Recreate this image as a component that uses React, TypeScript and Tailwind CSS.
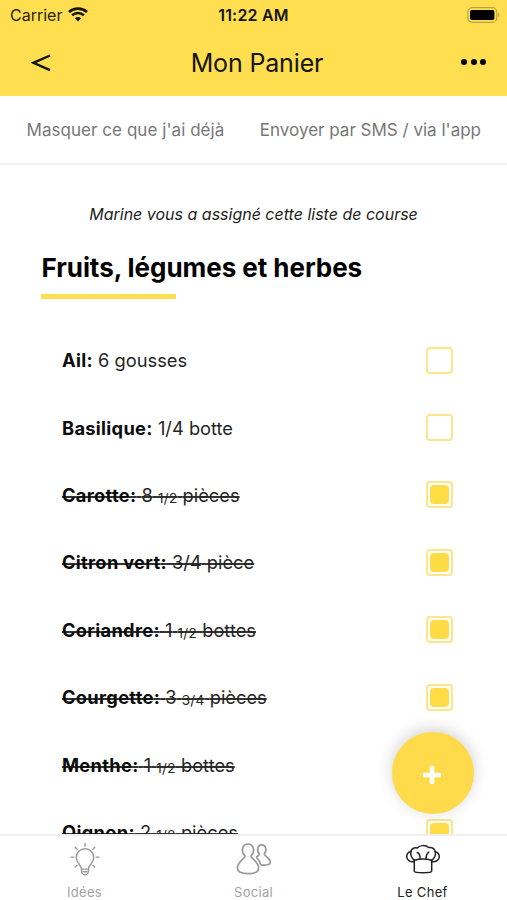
import clsx from "clsx";

type Item = {
  name: string;
  amount: string;
  fraction?: string;
  unit: string;
  done: boolean;
};

const ITEMS: Item[] = [
  { name: "Ail", amount: "6", unit: "gousses", done: false },
  { name: "Basilique", amount: "1/4", unit: "botte", done: false },
  { name: "Carotte", amount: "8", fraction: "1/2", unit: "pièces", done: true },
  { name: "Citron vert", amount: "3/4", unit: "pièce", done: true },
  { name: "Coriandre", amount: "1", fraction: "1/2", unit: "bottes", done: true },
  { name: "Courgette", amount: "3", fraction: "3/4", unit: "pièces", done: true },
  { name: "Menthe", amount: "1", fraction: "1/2", unit: "bottes", done: true },
  { name: "Oignon", amount: "2", fraction: "1/2", unit: "pièces", done: true },
];

const STRIKE = "underline decoration-[#333] decoration-[1.5px] [text-decoration-skip-ink:none]";

function WifiIcon() {
  return (
    <svg width="20" height="15" viewBox="0 0 20 15" fill="none" stroke="#15130a" aria-hidden="true">
      <path d="M1 4.9C6 .4 14 .4 19 4.9" strokeWidth="2.7" />
      <path d="M4.1 8.3c3.4-3 8.4-3 11.8 0" strokeWidth="2.5" />
      <path d="M6.9 11.2c1.8-1.5 4.4-1.5 6.2 0L10 14.4z" fill="#15130a" stroke="none" />
    </svg>
  );
}

function BatteryIcon() {
  return (
    <svg width="33" height="16" viewBox="0 0 33 16" aria-hidden="true">
      <rect x=".8" y=".6" width="29" height="14.8" rx="4.5" fill="none" stroke="#b8a344" strokeWidth="1.2" />
      <rect x="3" y="3" width="24.4" height="10" rx="1.8" fill="#000" />
      <path d="M31.2 5.8c1.8.8 1.8 3.6 0 4.4z" fill="#b8a344" />
    </svg>
  );
}

function BulbIcon() {
  return (
    <svg width="30" height="35" viewBox="0 0 32 36" fill="none" stroke="currentColor" strokeWidth="1.5" strokeLinecap="round" aria-hidden="true">
      <path d="M12.3 28.3c0-4.6-5.6-6.3-5.6-12.5a9.3 9.3 0 0 1 18.6 0c0 6.2-5.6 7.9-5.6 12.5z" />
      <path d="M12.3 28.3v2.2c0 1.8 1.5 3.8 3.7 3.8s3.7-2 3.7-3.8v-2.2M14 31h4" />
      <path d="M16 .8v3M5.6 5l2 2M26.4 5l-2 2M1 15.5h3M28 15.5h3M5.6 26l2-2M26.4 26l-2-2" />
    </svg>
  );
}

function PeopleIcon() {
  return (
    <svg width="36" height="34" viewBox="0 0 36 34" fill="none" stroke="currentColor" strokeWidth="1.7" strokeLinejoin="round" aria-hidden="true">
      <path d="M9 14C4.7 10.3 6 2 12 2s7.3 8.3 3 12c0 2.5 7.6 5.6 7.6 12 0 3.6-4.2 5.6-10.6 5.6S1.4 29.6 1.4 26C1.4 19.6 9 16.5 9 14z" />
      <path d="M20.2 15c1.6-1 3.3-1.7 3.3-3-3-2.5-2.2-9.2 2.3-9.2s5.3 6.7 2.3 9.2c0 1.8 6.2 4 6.2 8 0 2.7-3.6 3.6-9.6 2.8" />
      <path d="M20.2 15c2.2 2.2 3.9 4.5 4.5 7.8" />
    </svg>
  );
}

function ChefIcon() {
  return (
    <svg width="36" height="30" viewBox="0 0 36 30" fill="none" stroke="currentColor" strokeWidth="1.5" strokeLinecap="round" strokeLinejoin="round" aria-hidden="true">
      <path d="M9.3 16v11.2c0 1 3.6 1.5 8.7 1.5s8.7-.5 8.7-1.5V16" />
      <path d="M9.3 16.3c5.2-1.5 12.2-1.5 17.4 0" />
      <path d="M9 17.8c-3.5.3-7.3-1.3-7.3-5C1.7 9.4 3.4 8 5.9 7.5 6.7 4.4 9.6 3.2 12.3 4 14.7.9 21.3.9 23.7 3.6c3.3-.5 5.7 1 6.6 4.1 2.4.6 4 2.3 4 5.1 0 3.7-3.6 5.2-7.4 5" />
      <path d="M5.9 7.5c-.7 3.3.6 6.3 3.4 8.8M30.3 7.7c.8 3.2-.8 6.2-3.6 8.6M12.3 8.5c1.8 1 2.9 2.8 2.8 6M23.7 8c-1.8 1.6-2.7 3.6-2.7 6.5" />
    </svg>
  );
}

function CheckBox({ checked }: { checked: boolean }) {
  return (
    <span className="flex size-[27px] items-center justify-center rounded-[4px] border-2 border-[#fde68a]">
      {checked && <span className="size-[19px] rounded-[4px] bg-[#ffdb45]" />}
    </span>
  );
}

function ItemRow({ item }: { item: Item }) {
  // The strike is an offset underline, so it keeps one height across the small fractions.
  return (
    <li className="flex h-[67.45px] items-center justify-between">
      <span
        className={clsx(
          "text-[18.3px] leading-6 whitespace-nowrap text-[#252525]",
          item.done && STRIKE,
          item.done && "underline-offset-[-6px]",
        )}
      >
        <b className="font-bold tracking-[0.3px] text-[#0c0c0c]">{item.name}:</b> {item.amount}{" "}
        {item.fraction && (
          <>
            <span
              className={clsx(
                "inline-block align-[-1px] text-[13.5px] leading-4 tracking-[0.3px]",
                STRIKE,
                "underline-offset-[-7px]",
              )}
            >
              {item.fraction}
            </span>{" "}
          </>
        )}
        {item.unit}
      </span>
      <CheckBox checked={item.done} />
    </li>
  );
}

export default function App() {
  return (
    <div className="relative flex h-[900px] w-[507px] flex-col overflow-hidden bg-white font-['Inter',sans-serif] text-black">
      <header className="h-24 shrink-0 bg-[#ffde4f]">
        <div className="grid h-[29px] grid-cols-3 items-center px-[10px]">
          <div className="flex items-center gap-[6px] text-[16px] text-[#29240f]">
            <span>Carrier</span>
            <WifiIcon />
          </div>
          <span className="text-center text-[16px] font-semibold tracking-[0.2px] text-[#15130a]">11:22 AM</span>
          <div className="-mr-[3px] flex justify-end">
            <BatteryIcon />
          </div>
        </div>
        <div className="grid h-[66px] grid-cols-3 items-center pr-6 pl-[31px]">
          <button className="w-fit pt-px" aria-label="Retour">
            <svg width="20" height="18" viewBox="0 0 20 18" fill="none" stroke="#15130a" strokeWidth="2.4">
              <path d="M19 1.5 2.5 8.8 19 16.2" />
            </svg>
          </button>
          <h1 className="pt-px text-center text-[25px] leading-8 tracking-[-0.15px] whitespace-nowrap text-[#15130a]">
            Mon Panier
          </h1>
          <button className="-mr-[3px] flex justify-end gap-[3.5px]" aria-label="Plus d'options">
            <span className="size-[6px] rounded-full bg-black" />
            <span className="size-[6px] rounded-full bg-black" />
            <span className="size-[6px] rounded-full bg-black" />
          </button>
        </div>
      </header>

      <nav className="flex h-[68.5px] shrink-0 items-center justify-between border-b-2 border-[#f1f1f1] pt-[2px] pr-[26px] pl-[26.5px] text-[17px] text-[#777]">
        <button className="tracking-[0.05px]">Masquer ce que j'ai déjà</button>
        <button>Envoyer par SMS / via l'app</button>
      </nav>

      <main className="min-h-0 flex-1 overflow-hidden">
        <p className="mt-[37.5px] text-center text-[16px] leading-6 text-[#222] italic">
          Marine vous a assigné cette liste de course
        </p>
        <h2 className="mt-[26px] ml-[41.5px] text-[26px] leading-8 font-bold tracking-[-0.05px]">
          Fruits, légumes et herbes
        </h2>
        <div className="mt-[10px] ml-[41px] h-[5px] w-[135px] bg-[#ffde4f]" />
        <ul className="mt-[27.4px] pr-[54px] pl-[62px]">
          {ITEMS.map((item) => (
            <ItemRow key={item.name} item={item} />
          ))}
        </ul>
      </main>

      <button
        className="absolute top-[732px] left-[391.5px] flex size-[82px] items-center justify-center rounded-full bg-[#ffdb4b] shadow-[0_-3px_16px_rgba(0,0,0,0.18)]"
        aria-label="Ajouter"
      >
        <svg className="mt-1 mr-[1px]" width="20" height="20" viewBox="0 0 20 20" stroke="#fff" strokeWidth="4.5" strokeLinecap="round">
          <path d="M10 3v14M3 10h14" />
        </svg>
      </button>

      <footer className="relative grid h-[66px] shrink-0 grid-cols-3 border-t-2 border-[#efefef] bg-white text-[13px] leading-4 tracking-[0.3px] text-[#a3a3a3]">
        <button className="flex flex-col items-center">
          <span className="mt-[6px] flex h-[42px] items-start text-[#999]">
            <BulbIcon />
          </span>
          Idées
        </button>
        <button className="flex flex-col items-center">
          <span className="mt-[6px] flex h-[42px] items-start text-[#999]">
            <PeopleIcon />
          </span>
          Social
        </button>
        <button className="flex flex-col items-center text-[#222]">
          <span className="mt-[8px] flex h-[40px] items-start">
            <ChefIcon />
          </span>
          Le Chef
        </button>
      </footer>
    </div>
  );
}
